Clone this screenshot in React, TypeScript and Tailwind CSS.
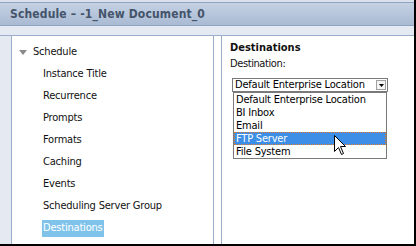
import React from "react";

const font = "font-['DejaVu_Sans_Condensed','DejaVu_Sans',sans-serif]";

const treeItems = [
  "Instance Title",
  "Recurrence",
  "Prompts",
  "Formats",
  "Caching",
  "Events",
  "Scheduling Server Group",
];

const options = [
  "Default Enterprise Location",
  "BI Inbox",
  "Email",
  "FTP Server",
  "File System",
];

function Cursor() {
  return (
    <svg width="13" height="21" viewBox="0 0 13 21" className="absolute left-[334px] top-[135px]">
      <path
        d="M0.5 0.5 L0.5 16.5 L4.5 12.5 L7.5 19.5 L9.5 18.5 L6.5 11.5 L11.5 11.5 Z"
        fill="#fff"
        stroke="#000"
        strokeWidth="1"
      />
    </svg>
  );
}

export default function App() {
  return (
    <div className={`relative flex h-[246px] w-[416px] flex-col overflow-hidden border-r-2 border-b-2 border-black bg-white ${font}`}>
      {/* Title bar */}
      <div className="h-[2px] bg-[#dbe2ec]" />
      <div className="flex h-[24px] items-center border-t border-b border-[#8fa4c3] bg-gradient-to-b from-[#c6d2e4] to-[#a9bad3] pl-[10px] text-[12px] font-bold tracking-[0.15px] text-[#44546a]">
        Schedule – -1_New Document_0
      </div>
      <div className="h-[10px] border-b border-[#9aadcb] bg-[#e4e9f2]" />

      {/* Body */}
      <div className="flex flex-1">
        <div className="w-[11px] bg-[#e4e9f2]" />

        {/* Tree */}
        <div className="w-[203px] border-x border-[#9aadcb] pt-[5px] text-[11px] tracking-[-0.2px] text-[#111]">
          <div className="flex h-[22px] items-center pl-[7px]">
            <svg width="8" height="5" viewBox="0 0 8 5" className="mr-[6px]">
              <path d="M0 0 L8 0 L4 5 Z" fill="#8a8a8a" />
            </svg>
            Schedule
          </div>
          {treeItems.map((t) => (
            <div key={t} className="flex h-[22px] items-center pl-[31px]">
              {t}
            </div>
          ))}
          <div className="flex h-[22px] items-center pl-[30px]">
            <span className="flex h-[17px] items-center bg-[#7fc3ea] px-[1px] text-white">Destinations</span>
          </div>
        </div>

        <div className="w-[7px]" />

        {/* Destinations panel */}
        <div className="flex-1 border-l border-[#9aadcb] pl-[8px] pt-[4px]">
          <div className="h-[15px] text-[11px] font-bold leading-[15px] text-[#111]">Destinations</div>
          <div className="mt-[1px] h-[15px] text-[11px] leading-[15px] tracking-[-0.4px] text-[#111]">Destination:</div>
          <div className="ml-[2px] mt-[7px] flex h-[14px] w-[156px] items-center border border-[#7a7a7a] bg-white">
            <span className="flex-1 pl-[2px] text-[11px] leading-[12px] tracking-[-0.2px] text-black">Default Enterprise Location</span>
            <span className="mr-[1px] flex h-[10px] w-[10px] items-center justify-center border border-[#a0a0a0] bg-[#f4f4f4]">
              <svg width="5" height="3" viewBox="0 0 5 3">
                <path d="M0 0 L5 0 L2.5 3 Z" fill="#000" />
              </svg>
            </span>
          </div>
        </div>
      </div>

      {/* Open dropdown list */}
      <div className="absolute left-[233px] top-[92px] w-[154px] border border-[#7a7a7a] bg-white text-[11px] tracking-[-0.2px] text-black">
        {options.map((o) =>
          o === "FTP Server" ? (
            <div key={o} className="h-[13px] border border-dotted border-[#e07b2a] bg-[#3d8ee6] pl-[1px] leading-[11px] text-white">
              {o}
            </div>
          ) : (
            <div key={o} className="h-[13px] pl-[2px] leading-[13px]">
              {o}
            </div>
          )
        )}
      </div>

      <Cursor />
    </div>
  );
}
